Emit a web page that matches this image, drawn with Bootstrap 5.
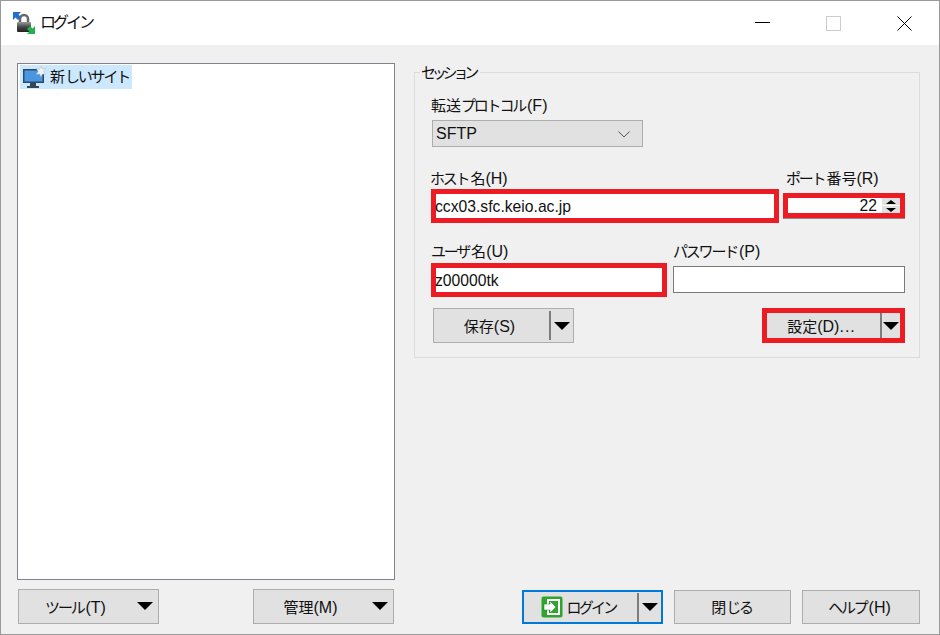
<!DOCTYPE html>
<html lang="ja">
<head>
<meta charset="utf-8">
<title>ログイン</title>
<link href="https://cdn.jsdelivr.net/npm/bootstrap@5.3.0/dist/css/bootstrap.min.css" rel="stylesheet">
<style>
html,body{margin:0;height:635px;overflow:hidden;background:#f0f0f0}
body{font-family:"Liberation Sans","Noto Sans CJK JP",sans-serif;font-size:16px;line-height:20px;color:#111}
.kn{font-size:15px;letter-spacing:-2.2px;margin-right:2px}
.kj{font-size:15px}
.win{width:940px;height:635px;border:1px solid #9a9a9a;background:#f0f0f0}
.tbar{height:44px;background:#fff;padding-left:11px}
.ttl{margin-left:4px}
.ttl .kn{font-size:16px;letter-spacing:-3px}
.wctl{margin-left:auto;margin-right:-1px}
.wctl span{display:flex;width:71px;justify-content:center;align-items:center;height:44px}
.mainw{padding:18px 19px 0 16px;gap:19px}
.leftc{width:378px}
.tree{height:517px;background:#fff;border:1px solid #82828c;padding:1px 2px}
.treeitem{background:#cce8ff;height:24px;width:112px;padding-left:3px;gap:3px;white-space:nowrap}
.treeitem svg,.logb svg{flex-shrink:0}
.wbtn{background:#e1e1e1;border:1px solid #adadad;height:35px;border-radius:0;padding:0;color:#111;font:inherit;display:flex;align-items:center;justify-content:center;white-space:nowrap}
.wbtn>span:first-child,.setb>.wlab{padding-top:2px}
.tri{width:0;height:0;border-left:8px solid transparent;border-right:8px solid transparent;border-top:8px solid #000}
.toolb{width:141px;margin-left:1px;position:relative;padding-right:26px}
.toolb .tri{position:absolute;right:5px;top:12px}
.btnrow{margin-top:9px;padding-right:1px}
.rightc{width:506px}
.gbox{position:relative;margin-top:9px;height:286px;border:1px solid #dcdcdc;padding:22px 14px 0 16px}
.gtitle{position:absolute;left:5px;top:-8px;background:#f0f0f0;padding:0 1px;white-space:nowrap;height:16px;line-height:16px}
.gtitle .kn{letter-spacing:-4.2px;margin-right:4px}
.lbl{height:20px;line-height:22px;white-space:nowrap}
.sel{width:211px;height:27px;margin:5px 0 0 1px;background:#e1e1e1;border:1px solid #adadad;padding:1px 12px 0 3px}
.sel svg{margin-left:auto}
.hostrow{margin-top:21px}
.hostc{width:348px}
.portc{width:122px;margin-left:4px}
.portc .lbl{padding-left:3px}
.redb{border:5px solid #ed1c24;background:#fff;height:34px;line-height:26px;margin-top:1px;font-size:15.7px}
.hostc .lbl{margin-left:-1px}
.hostc .redb,.userc .redb{text-indent:-1px}
.portbox{height:25px;margin-top:5px;line-height:15px;position:relative;text-align:right;padding-right:23px;box-shadow:0 1px 0 #8a8a8a}
.spin{position:absolute;right:0;top:0;width:18px;height:15px;gap:1px;background:#fff}
.spin i{display:flex;flex:1;background:#e1e1e1;align-items:center;justify-content:center}
.tup{width:0;height:0;border-left:5px solid transparent;border-right:5px solid transparent;border-bottom:4px solid #000}
.tdn{width:0;height:0;border-left:5px solid transparent;border-right:5px solid transparent;border-top:4px solid #000}
.userrow{margin-top:18px}
.userc{width:236px}
.passc{width:232px;margin-left:6px}
.passbox{height:27px;margin-top:5px;background:#fff;border:1px solid #7a7a7a}
.userc .redb{margin-top:2px}
.btnr2{margin-top:11px}
.splitb{width:141px;margin-left:2px;position:relative}
.splitb .wlab{flex:1;text-align:center;padding-right:4px}
.seppart{border-left:2px solid #7d7d7d;height:29px;width:24px;display:flex;align-items:center;justify-content:center}
.setb{width:143px;height:35px;margin-left:auto;border:5px solid #ed1c24;background:#e1e1e1;display:flex;align-items:center}
.setb .wlab{flex:1;text-align:center;padding-right:4px;word-spacing:0}
.setb .dots{letter-spacing:1px}
.setb .seppart{height:25px;width:20px}
.botrow{margin-top:232px;height:34px}
.botrow .wbtn{height:34px}
.botrow .logb{width:141px;margin-left:108px;border:2px solid #0078d7}
.botrow .logb .wlab{flex:1;display:flex;align-items:center;justify-content:center;gap:3px;padding:0 2px 0 0}
.logb .kn{letter-spacing:-2.7px;padding-top:2px}
.closeb{width:117px;margin-left:11px}
.helpb{width:118px;margin-left:11px;padding-right:3px}
</style>
</head>
<body>
<div class="win">
  <div class="tbar d-flex align-items-center">
    <svg width="24" height="24" viewBox="0 0 24 24">
      <defs><linearGradient id="lk" x1="0" y1="0" x2="0" y2="1"><stop offset="0" stop-color="#9a9a9a"/><stop offset=".5" stop-color="#444"/><stop offset="1" stop-color="#222"/></linearGradient></defs>
      <path d="M1 1h8L6.500 3.500 9 6 6 9 3.500 6.500 1 9z" fill="#1f6fd6"/>
      <path d="M8 12V8a4 4 0 0 1 8 0v4" fill="none" stroke="#666" stroke-width="2.500"/>
      <rect x="5" y="11" width="14" height="10" rx="1" fill="url(#lk)"/>
      <path d="M23 23h-8l2.500-2.500-2.500-2.500 3-3 2.500 2.500L23 15z" fill="#22b14c"/>
    </svg>
    <span class="ttl"><span class="kn">ログイン</span></span>
    <div class="wctl d-flex">
      <span><svg width="15" height="2"><rect width="15" height="1" fill="#000"/></svg></span>
      <span><svg width="15" height="15"><rect x=".5" y=".5" width="14" height="14" fill="none" stroke="#ccc"/></svg></span>
      <span><svg width="15" height="15"><path d="M.5.500l14 14M14.500.500l-14 14" stroke="#000" fill="none"/></svg></span>
    </div>
  </div>
  <div class="d-flex mainw">
    <div class="leftc">
      <div class="tree">
        <div class="treeitem d-flex align-items-center">
          <svg width="24" height="23" viewBox="0 0 24 23">
            <rect x="0" y="3" width="21" height="14" fill="#2b4a6b"/>
            <rect x="1.500" y="4.500" width="18" height="11" fill="#4a96e0"/>
            <rect x="7" y="17" width="6" height="3" fill="#33475b"/>
            <rect x="4" y="20" width="12" height="2" fill="#33475b"/>
            <path d="M18 0l1.300 3 3.400-.5-1.900 3 1.900 2.800-3.400-.3-1.300 3-1.300-3-3.300.3 1.800-2.800-1.800-3 3.300.5z" fill="#eef3f8" stroke="#a9b9c9" stroke-width=".5"/>
          </svg>
          <span><span class="kj">新</span><span class="kn">しいサイト</span></span>
        </div>
      </div>
      <div class="d-flex justify-content-between btnrow">
        <button class="wbtn toolb" type="button"><span><span class="kn">ツール</span>(T)</span><span class="tri"></span></button>
        <button class="wbtn toolb" type="button"><span><span class="kj">管理</span>(M)</span><span class="tri"></span></button>
      </div>
    </div>
    <div class="rightc">
      <div class="gbox">
        <div class="gtitle"><span class="kn">セッション</span></div>
        <div class="lbl"><span class="kj">転送</span><span class="kn">プロトコル</span>(F)</div>
        <div class="sel d-flex align-items-center"><span>SFTP</span>
          <svg width="12" height="7" viewBox="0 0 12 7"><path d="M.5.500 6 6l5.500-5.500" fill="none" stroke="#555"/></svg></div>
        <div class="d-flex hostrow">
          <div class="hostc"><div class="lbl"><span class="kn">ホスト</span><span class="kj">名</span>(H)</div><div class="redb">ccx03.sfc.keio.ac.jp</div></div>
          <div class="portc"><div class="lbl"><span class="kn">ポート</span><span class="kj">番号</span>(R)</div>
            <div class="redb portbox">22<div class="spin d-flex flex-column"><i><b class="tup"></b></i><i><b class="tdn"></b></i></div></div></div>
        </div>
        <div class="d-flex userrow">
          <div class="userc"><div class="lbl"><span class="kn">ユーザ</span><span class="kj">名</span>(U)</div><div class="redb">z00000tk</div></div>
          <div class="passc"><div class="lbl"><span class="kn">パスワード</span>(P)</div><div class="passbox"></div></div>
        </div>
        <div class="d-flex btnr2">
          <button class="wbtn splitb" type="button"><span class="wlab"><span class="kj">保存</span>(S)</span><span class="seppart"><span class="tri"></span></span></button>
          <div class="setb"><span class="wlab"><span class="kj">設定</span>(D)<span class="dots">...</span></span><span class="seppart"><span class="tri"></span></span></div>
        </div>
      </div>
      <div class="d-flex botrow">
        <button class="wbtn logb" type="button"><span class="wlab">
          <svg width="22" height="22" viewBox="0 0 22 22"><rect x=".5" y=".5" width="21" height="21" rx="2" fill="#2ea52e"/><rect x="6" y="3" width="13" height="16" fill="#fff"/><rect x="8" y="5" width="9" height="12" fill="#2ea52e"/><path d="M3 8h6V5l6 6-6 6v-3H3z" fill="#fff" stroke="#1c7a1c" stroke-width=".5"/></svg><span class="kn">ログイン</span></span><span class="seppart"><span class="tri"></span></span></button>
        <button class="wbtn closeb" type="button"><span><span class="kj">閉</span><span class="kn">じる</span></span></button>
        <button class="wbtn helpb" type="button"><span><span class="kn">ヘルプ</span>(H)</span></button>
      </div>
    </div>
  </div>
</div>
</body>
</html>
